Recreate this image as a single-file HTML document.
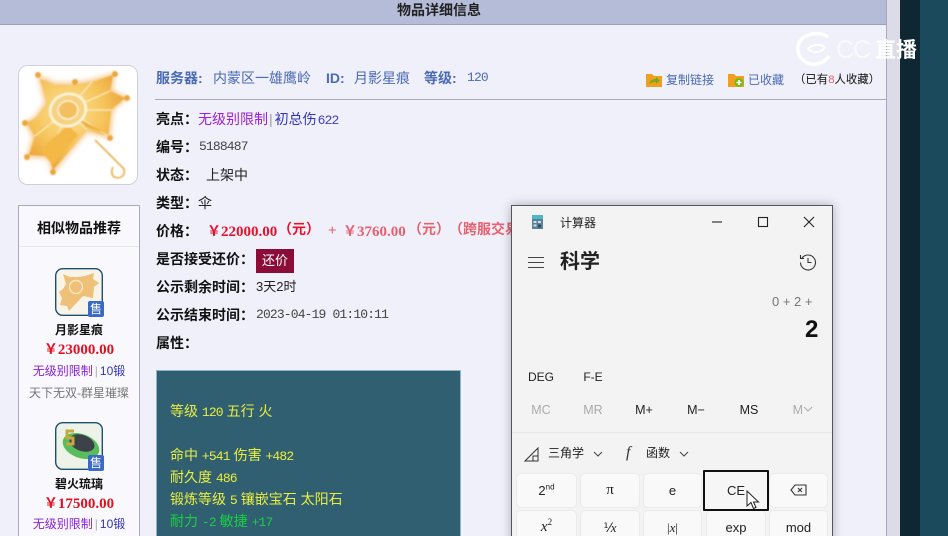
<!DOCTYPE html>
<html lang="zh"><head><meta charset="utf-8"><style>
html,body{margin:0;padding:0;width:948px;height:536px;overflow:hidden}
#w{position:absolute;left:0;top:0;width:948px;height:536px;overflow:hidden;background:#eff0fa;font-family:"Liberation Mono","Noto Sans CJK SC",monospace;font-size:14px;color:#222}
.a{position:absolute;white-space:nowrap;line-height:18px}
.l{font-family:"Liberation Sans","Noto Sans CJK SC",sans-serif;font-weight:700;color:#111;font-size:14px}
.s{font-family:"Liberation Sans","Noto Sans CJK SC",sans-serif}
.m{font-family:"Liberation Mono","Noto Sans CJK SC",monospace;font-size:13px;letter-spacing:-.85px}
.c{position:absolute;text-align:center;white-space:nowrap;left:19px;width:120px;font-family:"Liberation Sans","Noto Sans CJK SC",sans-serif;font-size:12px;line-height:16px}
.p{position:absolute;white-space:nowrap;font-family:"Liberation Serif","Noto Sans CJK SC",serif;font-weight:700;font-size:15px;line-height:18px}
.y{font-family:"Noto Sans CJK SC",sans-serif;font-size:14px}
.k{position:absolute;font-family:"Liberation Sans","Noto Sans CJK SC",sans-serif;font-size:13px;color:#222;text-align:center;line-height:16px}
.b{position:absolute;background:#f9f9f9;border-radius:4px;box-shadow:0 0 0 1px #ebebeb;font-family:"Liberation Sans","Noto Sans CJK SC",sans-serif;font-size:13px;color:#222;text-align:center}
</style></head><body><div id="w">

<div style="position:absolute;left:0;top:0;width:886px;height:24px;background:#b5bcd8;border-bottom:1px solid #9a9fbb"></div>
<div class="a l" style="left:397px;top:1px;color:#222">物品详细信息</div>
<div style="position:absolute;left:886px;top:0;width:13px;height:536px;background:#dcdce9;border-left:1px solid #a9a9bb"></div>
<div style="position:absolute;left:900px;top:0;width:20px;height:536px;background:#0f2732"></div>
<div style="position:absolute;left:920px;top:0;width:28px;height:536px;background:#1a4a5c"></div>

<svg style="position:absolute;left:18px;top:65px" width="120" height="120" viewBox="0 0 120 120">
<defs><radialGradient id="g" cx="42%" cy="38%" r="65%"><stop offset="0" stop-color="#fce29a"/><stop offset=".55" stop-color="#f6c55c"/><stop offset="1" stop-color="#eb9f33"/></radialGradient>
<filter id="f" x="-20%" y="-20%" width="140%" height="140%"><feGaussianBlur stdDeviation="3"/></filter><filter id="f2"><feGaussianBlur stdDeviation=".8"/></filter></defs>
<rect x=".5" y=".5" width="119" height="119" rx="9" fill="#fff" stroke="#cfd0dc"/>
<path filter="url(#f)" opacity=".6" d="M20 10L37 18L57 18L74 15L97 8L94 25L109 33L95 45L92 73L69 67L35 108L30 93L9 92L15 72L7 58L17 52L27 38Z" fill="#ee9a2c"/>
<g filter="url(#f2)">
<path d="M22 14L37 20L57 20L74 17L95 10L92 26L107 33L93 45L90 71L69 65L35 105L31 91L11 90L17 71L9 58L19 52L29 38Z" fill="url(#g)"/>
<path d="M50 45L17 71M50 45L31 91M50 45L69 65M50 45L90 71M50 45L94 45M50 45L92 26M50 45L74 17" stroke="#fff0c4" stroke-width="1" fill="none"/>
<path d="M22 85L50 60L60 70L35 100Z" fill="#f3b844"/><path d="M58 52L88 68L68 62Z" fill="#eeb040"/>
<ellipse cx="50" cy="45" rx="18" ry="16" fill="#f7d284" stroke="#fff6dc" stroke-width="2.500" transform="rotate(-20 50 45)"/>
<ellipse cx="50" cy="45" rx="10" ry="9" fill="#f3bf5e" stroke="#fff3d0" stroke-width="1.500"/>
<path d="M77 75L97 95L106 104C108 112 100 115 95 111C93 108 94 104 95 102" fill="none" stroke="#e8b458" stroke-width="1.800"/>
<g fill="#eca63a"><circle cx="20" cy="10" r="3"/><circle cx="97" cy="9" r="3"/><circle cx="109" cy="33" r="3"/><circle cx="92" cy="73" r="3"/><circle cx="35" cy="107" r="3"/><circle cx="9" cy="92" r="3"/><circle cx="7" cy="58" r="3"/><circle cx="57" cy="17" r="3"/></g>
</g></svg>

<div class="a s" style="left:156px;top:69px;color:#4a6ab5;font-size:14px;font-weight:700">服务器:</div>
<div class="a s" style="left:213px;top:69px;color:#4a6ab5;font-size:14px">内蒙区一雄鹰岭</div>
<div class="a s" style="left:326px;top:69px;color:#4a6ab5;font-size:14px;font-weight:700">ID:</div>
<div class="a s" style="left:354px;top:69px;color:#4a6ab5;font-size:14px">月影星痕</div>
<div class="a s" style="left:424px;top:69px;color:#4a6ab5;font-size:14px;font-weight:700">等级:</div>
<div class="a m" style="left:467px;top:69px;color:#4a6ab5">120</div>

<svg style="position:absolute;left:646px;top:72px" width="16" height="15" viewBox="0 0 16 15"><path d="M0 2h6l2 2h8v11H0z" fill="#f0a020"/><path d="M3 12c1-4 4-5 7-5V5l4 3.500-4 3.500v-2c-3 0-5 1-7 2z" fill="#7ea81a"/></svg>
<div class="a s" style="left:666px;top:71px;font-size:12px;color:#4a6ab5">复制链接</div>
<svg style="position:absolute;left:728px;top:72px" width="16" height="15" viewBox="0 0 16 15"><path d="M0 2h6l2 2h8v11H0z" fill="#f0a020"/><circle cx="11" cy="10.500" r="4.500" fill="#7ab814"/><path d="M11 8v5M8.500 10.500h5" stroke="#fff" stroke-width="1.600"/></svg>
<div class="a s" style="left:748px;top:71px;font-size:12px;color:#4a6ab5">已收藏</div>
<div class="a s" style="left:794px;top:71px;font-size:11.400px;color:#111">（已有<span style="color:#d66">8</span>人收藏）</div>
<div style="position:absolute;left:155px;top:99px;width:731px;height:1px;background:#a9a9bb"></div>

<svg style="position:absolute;left:794px;top:31px" width="42" height="36" viewBox="0 0 42 36"><path d="M34 6C26 0 10 2 5 12c-4 9 2 19 12 21 7 1 14-2 18-8" fill="none" stroke="#fff" stroke-width="3.500"/><path d="M14 18c4-5 12-5 17-2-3 6-12 7-17 2z" fill="none" stroke="#fff" stroke-width="2"/></svg>
<div class="a s" style="left:836px;top:36px;color:#fff;opacity:.7;font-size:25px;line-height:28px;letter-spacing:-1px">CC</div>
<div class="a s" style="left:875px;top:37px;color:#fff;font-size:21px;font-weight:700;line-height:28px">直播</div>

<div class="a l" style="left:156px;top:110px">亮点：</div>
<div class="a s" style="left:198px;top:110px;color:#a020d0;font-size:14px">无级别限制<span style="color:#99a;margin:0 2px 0 1px">|</span><span style="color:#3333bb">初总伤</span><span class="m" style="color:#3f3fbf;margin-left:1px">622</span></div>
<div class="a l" style="left:156px;top:138px">编号：</div><div class="a m" style="left:199px;top:138px;color:#444">5188487</div>
<div class="a l" style="left:156px;top:166px">状态：</div><div class="a s" style="left:206px;top:166px;color:#222">上架中</div>
<div class="a l" style="left:156px;top:194px">类型：</div><div class="a s" style="left:198px;top:194px;color:#222">伞</div>
<div class="a l" style="left:156px;top:222px">价格：</div>
<div class="p" style="left:207px;top:222px;color:#e8102a"><span class="y">￥</span>22000.00</div>
<div class="p" style="left:278px;top:222px;color:#e8102a;font-size:14px">（元）</div>
<div class="p" style="left:328px;top:222px;color:#e8606e">+</div>
<div class="p" style="left:343px;top:222px;color:#e8606e"><span class="y">￥</span>3760.00</div>
<div class="p" style="left:408px;top:222px;color:#e8606e;font-size:14px">（元）</div>
<div class="p" style="left:449px;top:222px;color:#e8606e;font-size:14px">（跨服交易）</div>
<div class="a l" style="left:156px;top:250px">是否接受还价：</div>
<div class="a s" style="left:256px;top:249px;width:38px;height:24px;line-height:24px;background:#8c0c38;color:#fff;text-align:center;font-size:13px">还价</div>
<div class="a l" style="left:156px;top:278px">公示剩余时间：</div><div class="a s" style="left:256px;top:278px;font-size:13px;color:#222">3天2时</div>
<div class="a l" style="left:156px;top:306px">公示结束时间：</div><div class="a m" style="left:256px;top:306px;color:#444">2023-04-19 01:10:11</div>
<div class="a l" style="left:156px;top:334px">属性：</div>

<div style="position:absolute;left:156px;top:370px;width:303px;height:180px;background:#315f72;border:1px solid #8fb5c8;border-bottom:0"></div>
<div class="a s" style="left:170px;top:400px;color:#e8ee40;font-size:14px;line-height:22px">等级 <span class="m">120</span> 五行 火</div>
<div class="a s" style="left:170px;top:444px;color:#e8ee40;font-size:14px;line-height:22px">命中 <span class="m">+541</span> 伤害 <span class="m">+482</span></div>
<div class="a s" style="left:170px;top:466px;color:#e8ee40;font-size:14px;line-height:22px">耐久度 <span class="m">486</span></div>
<div class="a s" style="left:170px;top:488px;color:#e8ee40;font-size:14px;line-height:22px">锻炼等级 <span class="m">5</span> 镶嵌宝石 太阳石</div>
<div class="a s" style="left:170px;top:510px;color:#18d040;font-size:14px;line-height:22px">耐力 <span class="m">-2</span> 敏捷 <span class="m">+17</span></div>

<div style="position:absolute;left:18px;top:205px;width:120px;height:340px;background:#f9f9fd;border:1px solid #aaaabc"></div>
<div style="position:absolute;left:19px;top:246px;width:120px;height:1px;background:#e6e6ee"></div>
<div class="c" style="top:220px;font-size:14px;font-weight:700;color:#111">相似物品推荐</div>

<svg style="position:absolute;left:55px;top:268px" width="49" height="49" viewBox="0 0 49 49"><rect x=".7" y=".7" width="46.600" height="46.600" rx="7" fill="#f8f4ea" stroke="#1d4f70" stroke-width="1.400"/><path d="M8 6L15 9L23 9L30 8L39 5L38 11L44 15L39 19L38 30L28 28L14 43L12 38L5 37L7 30L4 24L8 21L11 16Z" fill="#eec078"/><circle cx="21" cy="19" r="6.500" fill="none" stroke="#f9e5c0" stroke-width="1.400"/><rect x="33" y="33" width="16" height="16" rx="2" fill="#3a69c8"/></svg>
<div class="a s" style="left:88px;top:301px;width:16px;text-align:center;font-size:12px;color:#fff;line-height:16px">售</div>
<div class="c" style="top:322px;font-weight:700;color:#111">月影星痕</div>
<div class="c" style="top:341px;font-family:'Liberation Serif','Noto Sans CJK SC',serif;font-weight:700;font-size:15px;color:#e01020"><span class="y">￥</span>23000.00</div>
<div class="c" style="top:363px;color:#8a20d0">无级别限制<span style="color:#aab;margin:0 2px">|</span><span style="color:#3333bb">10锻</span></div>
<div class="c" style="top:385px;color:#777">天下无双-群星璀璨</div>

<svg style="position:absolute;left:55px;top:422px" width="49" height="49" viewBox="0 0 49 49"><rect x=".7" y=".7" width="46.600" height="46.600" rx="7" fill="#edf3e8" stroke="#1d4f70" stroke-width="1.400"/><ellipse cx="26" cy="24" rx="19" ry="12" fill="#59bd5c" transform="rotate(20 26 24)"/><ellipse cx="27" cy="21" rx="13" ry="8" fill="#3c424a" transform="rotate(20 27 21)"/><path d="M19 9h-7v7h6v6h-7" fill="none" stroke="#c8a840" stroke-width="3"/><rect x="33" y="33" width="16" height="16" rx="2" fill="#3a69c8"/></svg>
<div class="a s" style="left:88px;top:455px;width:16px;text-align:center;font-size:12px;color:#fff;line-height:16px">售</div>
<div class="c" style="top:476px;font-weight:700;color:#111">碧火琉璃</div>
<div class="c" style="top:495px;font-family:'Liberation Serif','Noto Sans CJK SC',serif;font-weight:700;font-size:15px;color:#e01020"><span class="y">￥</span>17500.00</div>
<div class="c" style="top:516px;color:#8a20d0">无级别限制<span style="color:#aab;margin:0 2px">|</span><span style="color:#3333bb">10锻</span></div>

<!-- calculator -->
<div style="position:absolute;left:511px;top:205px;width:320px;height:340px;background:#f3f3f3;border:1px solid #55555f;box-shadow:0 0 10px rgba(0,0,0,.28)"></div>
<svg style="position:absolute;left:531px;top:214px" width="13" height="16" viewBox="0 0 13 16"><rect x="1" y="1" width="11" height="14" fill="#5a8196"/><rect x="1" y="1" width="11" height="4" fill="#4fb7c8"/><path d="M2.500 7h3v2h-3zM7 7h3v2H7zM2.500 10.500h3v2h-3z" fill="#cfdde4"/><rect x="7" y="10.500" width="3" height="3" fill="#20506e"/></svg>
<div class="a s" style="left:560px;top:214px;font-size:12px;color:#222">计算器</div>
<svg style="position:absolute;left:700px;top:212px" width="125" height="20" viewBox="0 0 125 20" fill="none" stroke="#222" stroke-width="1.100"><path d="M12 10h10"/><rect x="58.500" y="5.500" width="9" height="9"/><path d="M104 5l10 10M114 5l-10 10"/></svg>
<svg style="position:absolute;left:528px;top:255px" width="16" height="14" viewBox="0 0 16 14" stroke="#444" stroke-width="1.100"><path d="M0 2.500h16M0 7.500h16M0 12.500h16"/></svg>
<div class="a s" style="left:560px;top:250px;font-size:20px;line-height:24px;font-weight:700;color:#222">科学</div>
<svg style="position:absolute;left:799px;top:253px" width="18" height="18" viewBox="0 0 18 18" fill="none" stroke="#333" stroke-width="1.100"><path d="M3 5a7.500 7.500 0 1 1-1.500 4.500"/><path d="M1.500 2v3.500H5"/><path d="M9 5v4.500h3.500"/></svg>
<div class="a s" style="left:772px;top:293px;font-size:13px;color:#777">0 + 2 +</div>
<div class="a s" style="left:805px;top:316px;font-size:24px;line-height:28px;font-weight:700;color:#111">2</div>

<div class="k" style="left:521px;top:369px;width:40px;font-size:12px">DEG</div>
<div class="k" style="left:573px;top:369px;width:40px;font-size:12px">F-E</div>
<div class="k" style="left:521px;top:402px;width:40px;font-size:12.500px;color:#aaa">MC</div>
<div class="k" style="left:573px;top:402px;width:40px;font-size:12.500px;color:#aaa">MR</div>
<div class="k" style="left:624px;top:402px;width:40px;font-size:12.500px">M+</div>
<div class="k" style="left:676px;top:402px;width:40px;font-size:12.500px">M−</div>
<div class="k" style="left:729px;top:402px;width:40px;font-size:12.500px">MS</div>
<div class="k" style="left:783px;top:402px;width:20px;text-align:right;font-size:12.500px;color:#aaa">M</div>
<svg style="position:absolute;left:803px;top:406px" width="10" height="7" fill="none" stroke="#aaa"><path d="M1 1l4 4 4-4"/></svg>
<div style="position:absolute;left:512px;top:432px;width:320px;height:1px;background:#e8e8e8"></div>
<svg style="position:absolute;left:524px;top:446px" width="16" height="16" viewBox="0 0 16 16" fill="none" stroke="#333" stroke-width="1"><path d="M1 15L14 2v13zM9 15v-5h5"/></svg>
<div class="k" style="left:548px;top:445px;font-size:12px">三角学</div>
<svg style="position:absolute;left:592px;top:450px" width="12" height="8" fill="none" stroke="#444"><path d="M2 2l4 4 4-4"/></svg>
<div class="a" style="left:626px;top:444px;font-family:'Liberation Serif',serif;font-style:italic;font-size:16px;color:#333">f</div>
<div class="k" style="left:646px;top:445px;font-size:12px">函数</div>
<svg style="position:absolute;left:678px;top:450px" width="12" height="8" fill="none" stroke="#444"><path d="M2 2l4 4 4-4"/></svg>

<div class="b" style="left:517px;top:474px;width:59px;height:33px;line-height:33px">2<sup style="font-size:8px;line-height:0">nd</sup></div>
<div class="b" style="left:581px;top:474px;width:58px;height:33px;line-height:33px;font-family:'Liberation Serif',serif;font-size:15px">π</div>
<div class="b" style="left:644px;top:474px;width:57px;height:33px;line-height:33px">e</div>
<div class="b" style="left:770px;top:474px;width:57px;height:33px"></div>
<svg style="position:absolute;left:790px;top:483px" width="18" height="14" viewBox="0 0 18 14" fill="none" stroke="#333" stroke-width="1.100"><path d="M5 2h11v10H5L1 7zM8 5l4 4M12 5l-4 4"/></svg>
<div class="b" style="left:517px;top:511px;width:59px;height:33px;line-height:33px;font-family:'Liberation Serif',serif;font-style:italic;font-size:15px">x<sup style="font-size:9px;line-height:0;font-style:normal">2</sup></div>
<div class="b" style="left:581px;top:511px;width:58px;height:33px;line-height:33px;font-family:'Liberation Serif',serif">⅟<i>x</i></div>
<div class="b" style="left:644px;top:511px;width:57px;height:33px;line-height:33px;font-family:'Liberation Serif',serif">|<i>x</i>|</div>
<div class="b" style="left:707px;top:511px;width:58px;height:33px;line-height:33px">exp</div>
<div class="b" style="left:770px;top:511px;width:57px;height:33px;line-height:33px">mod</div>
<div class="b" style="left:703px;top:470px;width:62px;height:37px;line-height:37px;box-shadow:none;border:2px solid #111;border-radius:1px;background:#f6f6f6;box-sizing:content-box">CE</div>
<svg style="position:absolute;left:746px;top:490px" width="14" height="22" viewBox="0 0 14 22"><path d="M1 1v15l4-3.500 2.500 6 2.500-1-2.500-5.500h5z" fill="#fff" stroke="#222" stroke-width="1"/></svg>
</div></body></html>
